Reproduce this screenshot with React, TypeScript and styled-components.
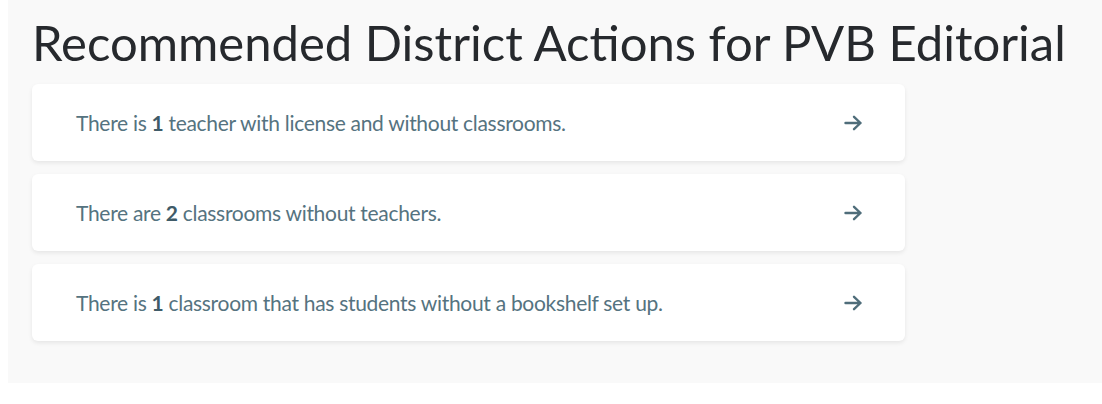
import React from 'react';
import styled, { createGlobalStyle } from 'styled-components';

const GlobalStyle = createGlobalStyle`
  body {
    margin: 0;
    background: #ffffff;
    font-family: Lato, "Open Sans", sans-serif;
  }
  #root {
    padding-left: 8px;
  }
`;

type Action = { lead: string; count: number; rest: string };

const actions: Action[] = [
  { lead: 'There is', count: 1, rest: 'teacher with license and without classrooms.' },
  { lead: 'There are', count: 2, rest: 'classrooms without teachers.' },
  { lead: 'There is', count: 1, rest: 'classroom that has students without a bookshelf set up.' },
];

const Arrow = () => (
  <svg width="19" height="16" viewBox="0 0 19 16" fill="none">
    <path d="M1.5 8h15M10 1.8L16.5 8 10 14.2" stroke="#4f6d7a" strokeWidth="2.4" strokeLinecap="round" strokeLinejoin="round" />
  </svg>
);

export default function App() {
  return (
    <>
      <GlobalStyle />
      <Panel>
        <Title>Recommended District Actions for PVB Editorial</Title>
        <List>
          {actions.map((a, i) => (
            <Card key={i}>
              <Message>
                {a.lead} <strong>{a.count}</strong> {a.rest}
              </Message>
              <Arrow />
            </Card>
          ))}
        </List>
      </Panel>
    </>
  );
}

const Panel = styled.section`
  background: #f9f9f9;
  height: 383px;
  box-sizing: border-box;
  padding: 13px 0 0 24px;
`;

const Title = styled.h1`
  margin: 0 0 12px 0;
  font-family: Lato, sans-serif;
  font-weight: 400;
  font-size: 49px;
  line-height: 59px;
  color: #26292d;
`;

const List = styled.div`
  display: flex;
  flex-direction: column;
  gap: 13px;
  width: 873px;
`;

const Card = styled.div`
  display: flex;
  align-items: center;
  justify-content: space-between;
  height: 77px;
  box-sizing: border-box;
  padding: 0 42px 0 44px;
  background: #ffffff;
  border-radius: 6px;
  box-shadow: 0 2px 4px rgba(0, 0, 0, 0.08);
`;

const Message = styled.p`
  margin: 0;
  font-size: 21px;
  color: #557380;
  letter-spacing: -0.3px;

  strong {
    font-weight: 700;
    color: #3f5b68;
  }
`;
